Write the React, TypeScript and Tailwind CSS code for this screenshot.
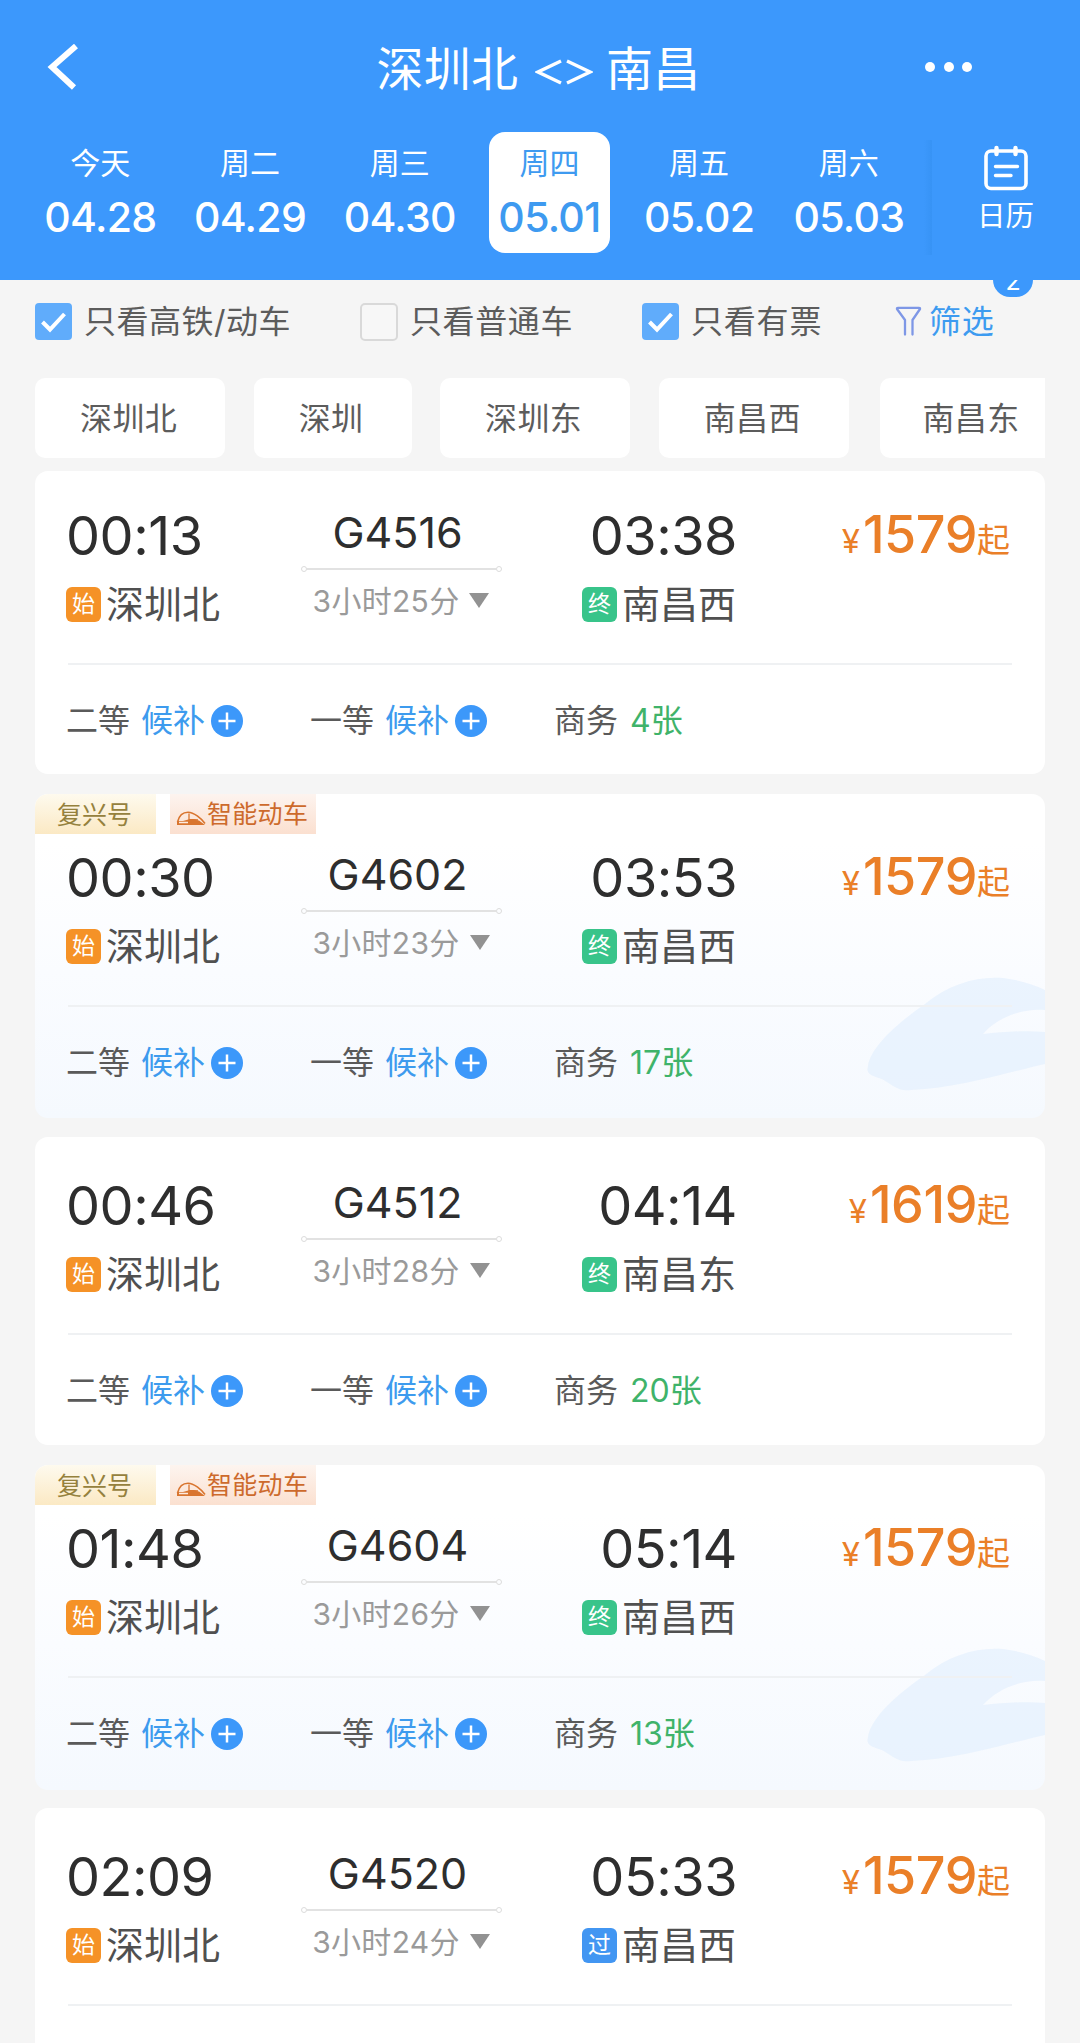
import React from "react";

const FONT = "font-['Inter','Noto_Sans_CJK_SC',sans-serif]";

type Train = {
  box: string;
  smart: boolean;
  dep: string;
  arr: string;
  no: string;
  duration: string;
  endKind: "终" | "过";
  endStation: string;
  price: string;
  business?: string;
};

const trains: Train[] = [
  { box: "h-[303px] pt-[39px]", smart: false, dep: "00:13", arr: "03:38", no: "G4516", duration: "3小时25分", endKind: "终", endStation: "南昌西", price: "1579", business: "4张" },
  { box: "mt-[20px] h-[324px] pt-[58px]", smart: true, dep: "00:30", arr: "03:53", no: "G4602", duration: "3小时23分", endKind: "终", endStation: "南昌西", price: "1579", business: "17张" },
  { box: "mt-[19px] h-[308px] pt-[43px]", smart: false, dep: "00:46", arr: "04:14", no: "G4512", duration: "3小时28分", endKind: "终", endStation: "南昌东", price: "1619", business: "20张" },
  { box: "mt-[20px] h-[325px] pt-[58px]", smart: true, dep: "01:48", arr: "05:14", no: "G4604", duration: "3小时26分", endKind: "终", endStation: "南昌西", price: "1579", business: "13张" },
  { box: "mt-[18px] h-[308px] pt-[43px]", smart: false, dep: "02:09", arr: "05:33", no: "G4520", duration: "3小时24分", endKind: "过", endStation: "南昌西", price: "1579" },
];

const days = [
  { label: "今天", date: "04.28" },
  { label: "周二", date: "04.29" },
  { label: "周三", date: "04.30" },
  { label: "周四", date: "05.01", active: true },
  { label: "周五", date: "05.02" },
  { label: "周六", date: "05.03" },
];

function Header() {
  return (
    <header className="relative z-10 h-[280px] bg-[#3c98fc] text-white">
      <div className="flex h-[132px] items-center pl-[46px] pr-[108px] pt-[2px]">
        <svg width="34" height="46" viewBox="0 0 34 46" fill="none" className="shrink-0">
          <path d="M30 2 6 23l22 20.500" stroke="white" strokeWidth="6" />
        </svg>
        <div className="flex flex-1 items-center justify-center pl-[72px] pt-[3px] text-[47px] leading-[60px]">
          <span className="tracking-[0.2px]">深圳北</span>
          <svg width="58" height="26" viewBox="0 0 58 26" fill="none" className="ml-[17px] mr-[13px] mt-[6px]">
            <path d="M26 2 3 13l23 11M32 2l23 11-23 11" stroke="white" strokeWidth="3.4" />
          </svg>
          <span className="tracking-[0.2px]">南昌</span>
        </div>
        <div className="flex gap-[8.5px]">
          <i className="size-[10px] rounded-full bg-white" />
          <i className="size-[10px] rounded-full bg-white" />
          <i className="size-[10px] rounded-full bg-white" />
        </div>
      </div>
      <div className="flex pl-[25.5px]">
        {days.map((d) => (
          <div key={d.date} className="flex w-[149.7px] justify-center">
            <div
              className={
                d.active
                  ? "flex h-[121px] w-[121px] flex-col items-center rounded-2xl bg-white text-[#3e9af0]"
                  : "flex h-[121px] w-[121px] flex-col items-center"
              }
            >
              <span className="mt-[12px] text-[30px] leading-[38px]">{d.label}</span>
              <span className="mt-[14px] text-[41px] font-[450] leading-[42px] tracking-[-0.7px]">{d.date}</span>
            </div>
          </div>
        ))}
        <div className="mt-[8px] h-[115px] w-[8px] bg-gradient-to-l from-[#328eee]/50 to-[#3c98fc]/0" />
        <div className="ml-[39px] flex w-[70px] flex-col items-center">
          <svg width="46" height="46" viewBox="0 0 46 46" fill="none" className="mt-[13px]" stroke="white" strokeLinecap="round">
            <rect x="3" y="6" width="40" height="37.5" rx="5" strokeWidth="3.6" />
            <path d="M13.5 3v6M32.5 3v6" strokeWidth="4.4" />
            <path d="M12.500 21.500h22M12.500 30.500h15.500" strokeWidth="3.400" />
          </svg>
          <span className="mt-[6px] text-[28.5px] leading-[38px]">日历</span>
        </div>
      </div>
    </header>
  );
}

function Check({ on }: { on: boolean }) {
  return on ? (
    <div className="flex size-[37px] items-center justify-center rounded-[4px] bg-[#60acfb]">
      <svg width="27" height="22" viewBox="0 0 27 22" fill="none">
        <path d="M2.500 11 10 18.500 24.500 3" stroke="white" strokeWidth="4" />
      </svg>
    </div>
  ) : (
    <div className="size-[38px] rounded-[5px] border-[2.500px] border-[#d9d9d9] bg-[#f7f7f7]" />
  );
}

function Filters() {
  return (
    <div className="relative flex h-[83px] items-center pl-[35px] text-[32px] leading-[40px] text-[#5c5c5c]">
      <div className="flex w-[325px] items-center gap-[12px]">
        <Check on />
        <span className="tracking-[0.5px]">只看高铁/动车</span>
      </div>
      <div className="flex w-[282px] items-center gap-[12px]">
        <Check on={false} />
        <span className="tracking-[0.6px]">只看普通车</span>
      </div>
      <div className="flex w-[253px] items-center gap-[12px]">
        <Check on />
        <span className="tracking-[0.8px]">只看有票</span>
      </div>
      <div className="flex items-center gap-[7px] text-[#3d9bf0]">
        <svg width="27" height="31" viewBox="0 0 27 31" fill="none" stroke="#7e97e6" strokeWidth="2.300" strokeLinejoin="round" strokeLinecap="round">
          <path d="M10 28.500V14L2 3Q1.800 1.800 3 1.800h21q1.200 0 1 1.200L17.500 14v14.500" />
        </svg>
        <span className="tracking-[0.8px]">筛选</span>
      </div>
      <div className="absolute -top-[21px] left-[993px] flex h-[38px] w-[40px] items-end justify-center rounded-[17px] bg-[#3c98fc] pb-[6px] text-[25px] leading-[20px] text-white">
        2
      </div>
    </div>
  );
}

function Stations() {
  return (
    <div className="mx-[35px] mt-[15px] flex h-[80px] gap-[28.5px] overflow-hidden text-[32px] leading-[81px] tracking-[0.4px] text-[#5c5c5c]">
      {["深圳北", "深圳", "深圳东", "南昌西", "南昌东"].map((s) => (
        <div key={s} className="shrink-0 rounded-[10px] bg-white pl-[45px] pr-[48px] last:ml-[3px] last:pl-[42px]">
          {s}
        </div>
      ))}
    </div>
  );
}

const kindColor: Record<string, string> = {
  始: "bg-[#f59227]",
  终: "bg-[#38c48a]",
  过: "bg-[#4296f2]",
};

function Station({ kind, name }: { kind: string; name: string }) {
  return (
    <div className="flex items-center gap-[5px]">
      <span className={`flex size-[35px] items-center justify-center rounded-[6px] text-[23px] leading-[35px] text-white ${kindColor[kind]}`}>
        {kind}
      </span>
      <span className="text-[38px] leading-[40px] text-[#505050]">{name}</span>
    </div>
  );
}

function Seat({ name, tickets, width }: { name: string; tickets?: string; width: string }) {
  return (
    <div className={`flex items-center ${width}`}>
      <span className="text-[#5a5a5a]">{name}</span>
      {tickets ? (
        <span className="ml-[12px] text-[#3fb36a]">{tickets}</span>
      ) : (
        <>
          <span className="ml-[11px] text-[#3d9bee]">候补</span>
          <svg width="32" height="32" viewBox="0 0 32 32" className="ml-[6px]">
            <circle cx="16" cy="16" r="16" fill="#3c98fa" />
            <path d="M7.500 16h17M16 7.500v17" stroke="white" strokeWidth="2.500" />
          </svg>
        </>
      )}
    </div>
  );
}

function SmartTags() {
  return (
    <div className="absolute left-0 top-0 flex h-[40px] gap-[14px] text-[25px] leading-[42px]">
      <span className="w-[121px] rounded-tl-[12px] bg-gradient-to-b from-[#fefaee] to-[#fbe9c4] pl-[22px] text-[#95813d]">复兴号</span>
      <span className="flex w-[146px] items-center bg-gradient-to-b from-[#fdf4ef] to-[#fbe0d0] pl-[6px] text-[#cd6a2c]">
        <svg width="30" height="15" viewBox="0 0 30 15" fill="none" className="mr-px mt-[9px]">
          <path d="M1.500 11C3 5 7 1.300 12 1.300c6 0 13 6 17 11.200" stroke="#d9752f" strokeWidth="1.600" />
          <path d="M13 2.500v6l9 .5" stroke="#d9752f" strokeWidth="1.300" />
          <path d="M1 10h6l7-2 9 1.500 6 4.500H1Z" fill="#d9752f" />
          <path d="M3 11.500h9" stroke="#fdebe0" strokeWidth="1.300" />
        </svg>
        <span className="tracking-[0.3px]">智能动车</span>
      </span>
    </div>
  );
}

function TrainWatermark() {
  return (
    <svg width="180" height="120" viewBox="0 0 180 120" className="absolute right-0 top-[180px]">
      <path
        d="M3 92C6 72 34 48 60 30 84 10 112 2 138 4q24 3 42 12v20c-24-2-48 8-62 24 22-2 42-4 62-2v32c-36 8-86 24-134 26C30 118 26 108 14 104 5 101 1 99 3 92Z"
        fill="#dfecfd"
        fillOpacity="0.55"
      />
    </svg>
  );
}

function TrainCard({ t }: { t: Train }) {
  return (
    <article
      className={`relative shrink-0 overflow-hidden rounded-[13px] px-[33px] ${
        t.smart ? "bg-gradient-to-b from-white from-15% via-[#fafcff] via-55% to-[#f5f9fe]" : "bg-white"
      } ${t.box}`}
    >
      {t.smart && <SmartTags />}
      {t.smart && <TrainWatermark />}
      <div className="relative flex h-[155px] justify-between border-b-2 border-[#eff1f3]">
        <div className="-ml-[2px] w-[200px]">
          <div className="text-[54px] leading-[52px] tracking-[-0.5px] text-[#2e2e2e]">{t.dep}</div>
          <div className="mt-[22.5px]">
            <Station kind="始" name="深圳北" />
          </div>
        </div>
        <div className="ml-[33px] flex w-[201px] flex-col items-center">
          <div className="mt-[1px] -ml-[8px] text-[43px] leading-[43px] text-[#2e2e2e]">{t.no}</div>
          <div className="mt-[12px] flex w-full items-center">
            <i className="size-[6px] rounded-full border-[1.500px] border-[#dcdcdc]" />
            <i className="h-[2px] flex-1 bg-[#e2e2e2]" />
            <i className="size-[6px] rounded-full border-[1.500px] border-[#dcdcdc]" />
          </div>
          <div className="-ml-[1px] mt-[9px] flex items-center text-[30px] leading-[40px] tracking-[0.3px] text-[#9a9a9a]">
            {t.duration}
            <svg width="20" height="15" viewBox="0 0 20 15" className="ml-[10px]">
              <path d="M0 0h20L10 15Z" fill="#929292" />
            </svg>
          </div>
        </div>
        <div className="ml-[34px] flex w-[200px] flex-col items-end pr-[2px]">
          <div className="-mr-[1px] text-[54px] leading-[52px] tracking-[-0.5px] text-[#2e2e2e]">{t.arr}</div>
          <div className="mt-[22.500px]">
            <Station kind={t.endKind} name={t.endStation} />
          </div>
        </div>
        <div className="flex w-[272px] items-baseline justify-end pr-[2px] leading-[50px] text-[#ea7f28]">
          <span className="mr-[3px] text-[33px]">¥</span>
          <span className="text-[52px] font-medium tracking-[-0.4px]">{t.price}</span>
          <span className="relative -top-px text-[33px]">起</span>
        </div>
      </div>
      {t.business && (
        <div className="relative -ml-[2px] mt-[36px] flex text-[32px] leading-[40px]">
          <Seat name="二等" width="w-[244px]" />
          <Seat name="一等" width="w-[244px]" />
          <Seat name="商务" tickets={t.business} width="w-[200px]" />
        </div>
      )}
    </article>
  );
}

export default function App() {
  return (
    <div className={`h-[2043px] w-[1080px] overflow-hidden bg-[#f5f5f5] ${FONT}`}>
      <Header />
      <Filters />
      <Stations />
      <main className="mx-[35px] mt-[12.500px] flex flex-col">
        {trains.map((t) => (
          <TrainCard key={t.no} t={t} />
        ))}
      </main>
    </div>
  );
}
